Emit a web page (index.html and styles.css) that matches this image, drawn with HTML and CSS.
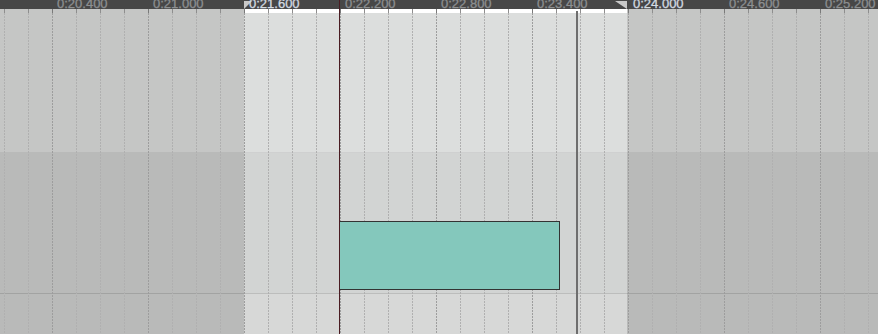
FILE: index.html
```html
<!DOCTYPE html>
<html lang="en">
<head>
<meta charset="UTF-8">
<title>Arrange</title>
<link rel="stylesheet" href="styles.css">
</head>
<body>
<div id="timeline">
    <div class="ruler" id="ruler">
        <span class="loop-start"></span>
        <span class="loop-end"></span>
    </div>
    <div class="strip"></div>
    <div class="tracks">
        <div class="track track-top"></div>
        <div class="track track-bottom">
            <div class="lane"></div>
            <div class="lane lane-low"></div>
        </div>
    </div>
    <div id="grid"></div>
    <div class="clip"></div>
    <div class="edit-cursor"></div>
    <div class="playhead"></div>
</div>

<script>
// ticks every 24px, a labelled bar every 4th tick
var grid = document.getElementById("grid");
var ruler = document.getElementById("ruler");
var labels = ["0:20.400", "0:21.000", "0:21.600", "0:22.200", "0:22.800", "0:23.400", "0:24.000", "0:24.600", "0:25.200"];

for (var x = 4; x < 878; x += 24) {
    var line = document.createElement("div");
    line.className = "gridline";
    if ((x - 52) % 96 === 0) line.className += " major";
    line.style.left = x + "px";
    grid.appendChild(line);
}

ruler.insertAdjacentHTML("beforeend", '<span class="label">00</span>');
ruler.lastChild.style.left = "-16px";
for (var i = 0; i < labels.length; i++) {
    var label = document.createElement("span");
    label.className = "label";
    if (i === 2 || i === 6) label.className += " bright";
    label.textContent = labels[i];
    label.style.left = (57 + i * 96) + "px";
    ruler.appendChild(label);
}
</script>
</body>
</html>
```

FILE: styles.css
```css
body {
    margin: 0;
    background: #c5c6c5;
    font-family: "Liberation Sans", Arial, sans-serif;
    overflow: hidden;
}
#timeline {
    position: relative;
    width: 878px;
    height: 334px;
    display: flex;
    flex-direction: column;
    overflow: hidden;
}
.ruler {
    position: relative;
    height: 9px;
    flex: none;
    background: #474747;
    overflow: hidden;
}
.label {
    position: absolute;
    top: -3px;
    font-size: 13px;
    line-height: 13px;
    color: #8d8f91;
    white-space: nowrap;
    -webkit-text-stroke: 0.3px currentColor;
}
.label.bright {
    color: #d4dbe2;
}
.loop-start {
    position: absolute;
    left: 244px;
    top: 1px;
    width: 0;
    height: 0;
    border-top: 8px solid #c9c9c9;
    border-right: 8px solid transparent;
}
.loop-end {
    position: absolute;
    left: 615px;
    top: 1px;
    width: 0;
    height: 0;
    border-top: 8px solid #c9c9c9;
    border-left: 12px solid transparent;
}
.strip {
    height: 4px;
    flex: none;
    background: linear-gradient(to right, #c5c6c5 244px, #ffffff 244px 627px, #c5c6c5 627px);
}
.tracks {
    flex: 1;
    display: flex;
    flex-direction: column;
}
.track-top {
    height: 139px;
    flex: none;
    border-bottom: 1px solid rgba(0, 0, 0, 0.06);
    background: linear-gradient(to right, #c5c6c5 244px, #dcdedd 244px 627px, #c5c6c5 627px);
}
.track-bottom {
    flex: 1;
    display: flex;
    flex-direction: column;
    background: linear-gradient(to right, #b9bab9 244px, #d2d4d3 244px 627px, #b9bab9 627px);
}
.lane {
    height: 140px;
    flex: none;
}
.lane-low {
    flex: 1;
    border-top: 1px solid rgba(0, 0, 0, 0.12);
    background: linear-gradient(to right, transparent 244px, rgba(255, 255, 255, 0.1) 244px 627px, transparent 627px);
}
.gridline {
    position: absolute;
    top: 9px;
    bottom: 0;
    width: 1px;
    background:
        linear-gradient(#8e8e8e, #8e8e8e) top / 1px 4px no-repeat,
        repeating-linear-gradient(to bottom, #b0b0b0 0 2px, transparent 2px 3px) 0 4px / 1px 100% repeat-y;
}
.gridline.major {
    background:
        linear-gradient(#7a7a7a, #7a7a7a) top / 1px 4px no-repeat,
        repeating-linear-gradient(to bottom, #9d9d9d 0 2px, transparent 2px 3px) 0 4px / 1px 100% repeat-y;
}
.clip {
    position: absolute;
    left: 339px;
    top: 221px;
    width: 219px;
    height: 67px;
    background: #84c8bc;
    border: 1px solid #333;
}
.edit-cursor {
    position: absolute;
    left: 576px;
    top: 11px;
    bottom: 0;
    width: 2px;
    background: #6e6e6e;
}
.playhead {
    position: absolute;
    left: 339px;
    top: 0;
    bottom: 0;
    width: 1px;
    background: #4a1c22;
}
```
